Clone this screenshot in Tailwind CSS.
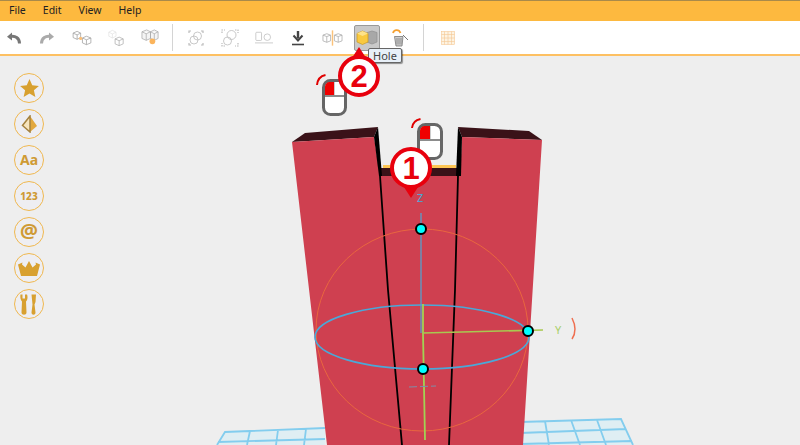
<!DOCTYPE html>
<html lang="en">
<head>
  <meta charset="UTF-8">
  <title>3D Builder</title>
  <script src="https://cdn.jsdelivr.net/npm/@tailwindcss/browser@4"></script>
</head>
<body class="w-[800px] h-[445px] overflow-hidden bg-[#eeeeee] font-['Noto_Sans',sans-serif] flex flex-col">

  <!-- menu -->
  <nav class="h-[21px] shrink-0 bg-[#fdb93f] border-t border-[#a98a4a] flex items-center gap-[17px] pl-[9px] pb-[2px] text-[10.5px] leading-none text-[#222]">
    <span>File</span><span>Edit</span><span>View</span><span>Help</span>
  </nav>

  <!-- toolbar -->
  <div class="h-[35px] shrink-0 bg-white border-b-2 border-[#fdc062] flex items-center">
    <div class="flex items-center blur-[0.3px]">
      <button class="w-[28px] h-[33px] flex items-center justify-center">
        <svg width="16" height="14" viewBox="0 0 16 14" fill="none"><path d="M13.500 12.500C13.500 7 9 4.500 4.500 5.500" stroke="#777" stroke-width="3"/><path d="M1 5.800L6 1.500V9.500Z" fill="#777"/></svg>
      </button>
      <button class="w-[37px] h-[33px] flex items-center justify-center">
        <svg width="16" height="14" viewBox="0 0 16 14" fill="none"><path d="M2.500 12.500C2.500 7 7 4.500 11.500 5.500" stroke="#aaa" stroke-width="3"/><path d="M15 5.800L10 1.500V9.500Z" fill="#aaa"/></svg>
      </button>
      <button class="w-[34px] h-[33px] flex items-center justify-center">
        <svg width="22" height="16" viewBox="0 0 24 18" fill="none" stroke="#999" stroke-width="0.800"><path d="M2 3.500L6.500 1.500L10.500 3.500V8.500L6.500 10.500L2 8.500ZM2 3.500L6.500 5.500L10.500 3.500M6.500 5.500V10.500"/><path d="M12.500 9L17 7L22 9V14.500L17 16.500L12.500 14.500ZM12.500 9L17 11L22 9M17 11V16.500"/><circle cx="10.500" cy="9.500" r="1.800" fill="#fbbf78" stroke="none"/></svg>
      </button>
      <button class="w-[34px] h-[33px] flex items-center justify-center">
        <svg width="18" height="18" viewBox="0 0 18 20" fill="none" stroke="#ccc" stroke-width="0.800"><path d="M1 3.500L5 1.500L9 3.500V8L5 10L1 8ZM1 3.500L5 5.500L9 3.500M5 5.500V10" stroke="#e3e3e3"/><path d="M8 11L12.500 9L17 11V16.500L12.500 18.500L8 16.500ZM8 11L12.500 13L17 11M12.500 13V18.500" stroke="#aaa"/></svg>
      </button>
      <button class="w-[34px] h-[33px] flex items-center justify-center">
        <svg width="19" height="19" viewBox="0 0 20 20" fill="none" stroke="#aaa" stroke-width="0.800"><path d="M1 4L6 2L10 4V11L5.500 13L1 11ZM10 4L14 2L18 4V11L14 13L10 11ZM1 4L5.500 6L10 4L14 6L18 4M5.500 6V13M14 6V13" fill="#f4f4f4"/><circle cx="12" cy="14" r="3" fill="#fbb45c" stroke="none"/></svg>
      </button>
      <div class="w-px h-[27px] bg-[#d4d4d4] ml-[5px]"></div>
      <button class="w-[34px] h-[33px] ml-[6px] flex items-center justify-center">
        <svg width="16" height="16" viewBox="0 0 16 16" fill="none" stroke="#bbb" stroke-width="0.800"><path d="M1 3V1H3M13 1H15V3M15 13V15H13M3 15H1V13" stroke-width="1.200"/><circle cx="9.500" cy="6" r="4"/><circle cx="6" cy="10" r="4"/></svg>
      </button>
      <button class="w-[34px] h-[33px] flex items-center justify-center">
        <svg width="18" height="18" viewBox="0 0 18 18" fill="none" stroke="#bbb" stroke-width="0.800"><path d="M1 4V1H4M14 1H17V4M17 14V17H14M4 17H1V14" stroke-width="1.200" stroke-dasharray="1.500 1"/><circle cx="10.500" cy="6" r="4.500"/><circle cx="6.500" cy="12" r="4"/></svg>
      </button>
      <button class="w-[34px] h-[33px] flex items-center justify-center">
        <svg width="18" height="14" viewBox="0 0 22 16" fill="none" stroke="#bbb" stroke-width="0.900"><rect x="1" y="1" width="7" height="10" rx="1"/><circle cx="15" cy="7" r="4"/><path d="M0 14H22"/></svg>
      </button>
      <button class="w-[34px] h-[33px] flex items-center justify-center">
        <svg width="14" height="16" viewBox="0 0 14 16" fill="none"><path d="M7 1V8.500" stroke="#444" stroke-width="2.400"/><path d="M2.500 5.500L7 10.500L11.500 5.500" stroke="#444" stroke-width="2"/><path d="M1 14.500H13" stroke="#444" stroke-width="1.600"/></svg>
      </button>
      <button class="w-[34px] h-[33px] flex items-center justify-center">
        <svg width="21" height="16" viewBox="0 0 22 16" fill="none" stroke="#aaa" stroke-width="0.800"><path d="M1 5L5 3.500L9 5V11L5 12.500L1 11ZM1 5L5 6.500L9 5M5 6.500V12.500M13 5L17 3.500L21 5V11L17 12.500L13 11ZM13 5L17 6.500L21 5M17 6.500V12.500"/><path d="M11 0V16" stroke="#fbc27a" stroke-width="1.500"/></svg>
      </button>
      <button class="w-[26px] h-[26px] ml-[5px] flex items-center justify-center bg-[#c9c9c9] border border-[#999] rounded-[2px]">
        <svg width="22" height="15" viewBox="0 0 22 15"><path d="M11 2.500L16 1L21 2.500V12L16 14L11 12Z" fill="#a8a8a8" stroke="#8f8f8f" stroke-width="0.700"/><path d="M1 3.500L6.500 1L12 3.500V12L6.500 14.500L1 12Z" fill="#f9c940" stroke="#c99a20" stroke-width="0.700"/><path d="M1 3.500L6.500 6L12 3.500L6.500 1Z" fill="#fde28a"/></svg>
      </button>
      <button class="w-[34px] h-[33px] ml-[4px] flex items-center justify-center">
        <svg width="20" height="20" viewBox="0 0 20 20" fill="none"><path d="M2 5C3 1.500 8 1 9.500 5" stroke="#f5a030" stroke-width="1.800"/><path d="M12 7L17 12" stroke="#777"/><path d="M3.500 8.500H12L11 18H5Z" fill="#ccc" stroke="#777" stroke-width="0.800"/><path d="M6 10V16.500M8 10V16.500M10 10V16.500" stroke="#777" stroke-width="0.700"/></svg>
      </button>
      <div class="w-px h-[27px] bg-[#d4d4d4] ml-[5px]"></div>
      <button class="w-[48px] h-[33px] flex items-center justify-center">
        <svg width="14" height="14" viewBox="0 0 14 14" fill="#fdf3e2" stroke="#f5c894" stroke-width="0.600"><rect x="0.500" y="0.500" width="13" height="13"/><path d="M3.500 0.500V13.500M7 0.500V13.500M10.500 0.500V13.500M0.500 3.500H13.500M0.500 7H13.500M0.500 10.500H13.500"/></svg>
      </button>
    </div>
  </div>

  <!-- workspace -->
  <main class="relative flex-1">
    <!-- left palette -->
    <div class="absolute left-[14px] top-[17px] flex flex-col gap-[6px] text-[#cf9a35]">
      <div class="w-[30px] h-[30px] rounded-full border border-[#f0b84f] bg-[#eeeef2] flex items-center justify-center">
        <svg width="19" height="18" viewBox="0 0 24 23" fill="#d8a030"><path d="M12 0L15.500 8L24 8.800L17.600 14.500L19.500 23L12 18.500L4.500 23L6.400 14.500L0 8.800L8.500 8Z"/></svg>
      </div>
      <div class="w-[30px] h-[30px] rounded-full border border-[#f0b84f] bg-[#eeeef2] flex items-center justify-center">
        <svg width="17" height="18" viewBox="0 0 17 18"><path d="M9 1L16 11L9 17Z" fill="#e2a83e"/><path d="M9 1L1.500 10.500L9 17Z" fill="#f6e4bd" stroke="#a5823f" stroke-width="1.500"/></svg>
      </div>
      <div class="w-[30px] h-[30px] rounded-full border border-[#f0b84f] bg-[#eeeef2] flex items-center justify-center text-[14px] font-bold leading-none">Aa</div>
      <div class="w-[30px] h-[30px] rounded-full border border-[#f0b84f] bg-[#eeeef2] flex items-center justify-center text-[10px] font-extrabold leading-none">123</div>
      <div class="w-[30px] h-[30px] rounded-full border border-[#f0b84f] bg-[#eeeef2] flex items-center justify-center text-[20px] font-bold leading-none pb-[2px]">@</div>
      <div class="w-[30px] h-[30px] rounded-full border border-[#f0b84f] bg-[#eeeef2] flex items-center justify-center">
        <svg width="22" height="15" viewBox="0 0 22 15" fill="#d8a030"><path d="M11 0L14.500 6.500L18 3.500L17.500 1.500L22 3.500L19 15H3L0 3.500L4.500 1.500L4 3.500L7.500 6.500Z"/></svg>
      </div>
      <div class="w-[30px] h-[30px] rounded-full border border-[#f0b84f] bg-[#eeeef2] flex items-center justify-center">
        <svg width="18" height="21" viewBox="0 0 18 21" fill="#d8a030"><path d="M0.500 0.500H2.500V4.500H5V0.500H7C8 3 7.500 6 6 7.500L6.500 18.500C6.500 21.500 1.500 21.500 1.500 18.500L2 7.500C0.500 6 0 3 0.500 0.500Z"/><path d="M11.500 0.500H16L15.500 8L14.500 10.500L15.500 18.500C15.500 21.500 11.500 21.500 11.500 18.500L12.500 10.500Z"/></svg>
      </div>
    </div>

    <!-- 3D scene -->
    <svg class="absolute left-0 top-0" width="800" height="389" viewBox="0 56 800 389" fill="none">
      <!-- grid -->
      <path d="M225 432L325 428V445H217ZM520 422L621 419L633 445H520Z" fill="#dfeef3"/>
      <g stroke="#83cdee" stroke-width="1.800">
        <path d="M217 445L225 432L325 428M250 431L247 445M278 430L276 445M306 429L304 445M218 442L325 439"/>
        <path d="M520 422L621 419L633 445M545 421L549 445M571 420L580 445M597 420L606 445M520 433L626 429M520 444L632 441"/>
      </g>
      <!-- dark tops -->
      <path d="M292 142L305 133L378 127L374 137Z" fill="#3a1218"/>
      <path d="M458 127L529 131L542 140L462 137Z" fill="#3a1218"/>
      <path d="M383 165H456V169H383Z" fill="#fdc553"/>
      <path d="M381 168H457V177H381Z" fill="#3a1218"/>
      <!-- body -->
      <path d="M292 142L374 137L380 176H460L462 137L542 140L523 445H327Z" fill="#cf4050"/>
      <path d="M374 137L378 127L382 176H379Z" fill="#000"/>
      <path d="M458 127L462 137L461 176H456Z" fill="#000"/>
      <path d="M380 176L388 290L402 445" stroke="#000" stroke-width="1.800"/>
      <path d="M458 176L455 290L449 445" stroke="#000" stroke-width="1.800"/>
      <!-- gizmo -->
      <ellipse cx="422" cy="330" rx="106" ry="101" stroke="#e9663f" stroke-width="1"/>
      <ellipse cx="422" cy="337" rx="107" ry="32" stroke="#4aa8d8" stroke-width="1.600"/>
      <path d="M421 213V333" stroke="#4aa8d8" stroke-width="1.200"/>
      <path d="M423 304V333L425 440" stroke="#a2d253" stroke-width="1.800"/>
      <path d="M423 333L543 330" stroke="#a8c850" stroke-width="1.500"/>
      <path d="M409 387L436 386" stroke="#7f8fa8" stroke-dasharray="8 3"/>
      <path d="M572 318C576 326 576 333 572 339" stroke="#ef6f50" stroke-width="1.500"/>
      <circle cx="421" cy="229" r="5" fill="#0ff" stroke="#000" stroke-width="2"/>
      <circle cx="528" cy="331" r="5" fill="#0ff" stroke="#000" stroke-width="2"/>
      <circle cx="423" cy="369" r="5" fill="#0ff" stroke="#000" stroke-width="2"/>
    </svg>
    <span class="absolute left-[417px] top-[136px] text-[11px] leading-none text-[#4aa8d8]">Z</span>
    <span class="absolute left-[555px] top-[268px] text-[11px] leading-none text-[#a8cf6a]">Y</span>

    <!-- mouse hints -->
    <svg class="absolute left-[316px] top-[18px]" width="32" height="44" viewBox="0 0 32 44" fill="none">
      <path d="M1 11C1.500 6 4.500 2 9.500 1" stroke="#e00000" stroke-width="2"/>
      <rect x="7.500" y="6.500" width="22" height="34" rx="7" fill="#fff" stroke="#666" stroke-width="3"/>
      <path d="M9 21V13C9 10 11 8 14 8H18V21Z" fill="#f00000"/>
      <path d="M8 22H29" stroke="#666" stroke-width="1.500"/>
      <path d="M18.500 8V21" stroke="#ccc"/>
    </svg>
    <svg class="absolute left-[411px] top-[62px]" width="34" height="44" viewBox="0 0 34 44" fill="none">
      <path d="M1 10C1.500 5 4.500 2 9.500 1" stroke="#e00000" stroke-width="2"/>
      <rect x="7.500" y="6.500" width="23" height="34" rx="7" fill="#fff" stroke="#666" stroke-width="3"/>
      <path d="M9 21V13C9 10 11 8 14 8H19V21Z" fill="#f00000"/>
      <path d="M8 22H30" stroke="#666" stroke-width="1.500"/>
      <path d="M19.500 8V21" stroke="#ccc"/>
    </svg>

    <!-- tooltip -->
    <div class="absolute left-[368px] top-[-8px] h-[15px] px-[4px] bg-[#e8f0f8] border border-[#666] rounded-[2px] flex items-center text-[11px] leading-none text-[#444] shadow-[1px_1px_1px_rgba(0,0,0,0.4)]">Hole</div>

    <!-- step badges -->
    <div class="absolute left-[338px] top-[-1px] w-[42px] h-[42px]">
      <div class="absolute left-[12px] top-[-8px] w-0 h-0 border-l-[9px] border-r-[9px] border-b-[14px] border-l-transparent border-r-transparent border-b-[#e8000d]"></div>
      <div class="relative w-[42px] h-[42px] rounded-full bg-white border-[4px] border-[#e8000d] flex items-center justify-center text-[#e8000d] text-[31px] font-bold leading-none font-['Liberation_Sans',sans-serif]">2</div>
    </div>
    <div class="absolute left-[390px] top-[91px] w-[42px] h-[42px]">
      <div class="absolute left-[12px] bottom-[-9px] w-0 h-0 border-l-[9px] border-r-[9px] border-t-[14px] border-l-transparent border-r-transparent border-t-[#e8000d]"></div>
      <div class="relative w-[42px] h-[42px] rounded-full bg-white border-[4px] border-[#e8000d] flex items-center justify-center text-[#e8000d] text-[31px] font-bold leading-none font-['Liberation_Sans',sans-serif]">1</div>
    </div>
  </main>
</body>
</html>
